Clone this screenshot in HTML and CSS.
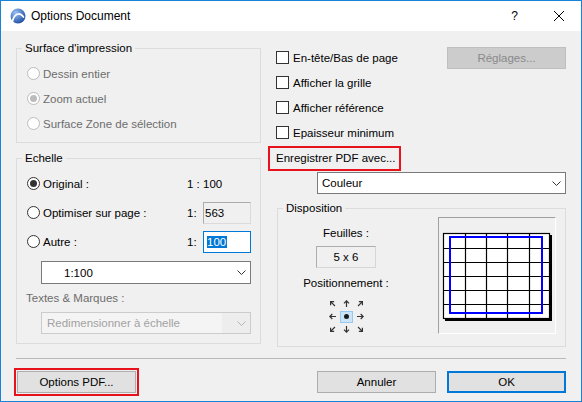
FILE: index.html
```html
<!DOCTYPE html>
<html lang="fr">
<head>
<meta charset="utf-8">
<title>Options Document</title>
<link rel="stylesheet" href="styles.css">
</head>
<body>
<div class="window">
  <div class="titlebar">
    <svg class="app-icon" viewBox="0 0 16 16" width="16" height="16">
      <defs>
        <radialGradient id="ball" cx="35%" cy="30%" r="75%">
          <stop offset="0" stop-color="#9cc2f2"/>
          <stop offset="1" stop-color="#1d4ea6"/>
        </radialGradient>
      </defs>
      <circle cx="8" cy="8" r="7.5" fill="url(#ball)"/>
      <path d="M2.5 13.5 C4 6 9.5 3 13.5 9" fill="none" stroke="#ffffff" stroke-width="1.7" stroke-linecap="round"/>
    </svg>
    <span class="title">Options Document</span>
    <span class="help">?</span>
    <svg class="close" viewBox="0 0 10 10" width="10" height="10">
      <path d="M0 0L10 10M10 0L0 10" stroke="#000" stroke-width="1"/>
    </svg>
  </div>

  <div class="body">
    <div class="main">
      <div class="left">
        <div class="group">
          <div class="group-title">Surface d'impression</div>
          <div class="radio-list">
            <div class="radio-row disabled"><span class="radio"></span><span>Dessin entier</span></div>
            <div class="radio-row disabled"><span class="radio checked"></span><span>Zoom actuel</span></div>
            <div class="radio-row disabled"><span class="radio"></span><span>Surface Zone de sélection</span></div>
          </div>
        </div>

        <div class="group echelle">
          <div class="group-title">Echelle</div>
          <div class="scale-rows">
            <div class="scale-row">
              <div class="radio-row"><span class="radio checked"></span><span>Original :</span></div>
              <div class="ratio"><span>1 : 100</span></div>
            </div>
            <div class="scale-row">
              <div class="radio-row"><span class="radio"></span><span>Optimiser sur page :</span></div>
              <div class="ratio"><span>1:</span><span class="field readonly">563</span></div>
            </div>
            <div class="scale-row">
              <div class="radio-row"><span class="radio"></span><span>Autre :</span></div>
              <div class="ratio"><span>1:</span><span class="field focused"><span class="selected">100</span></span></div>
            </div>
          </div>
          <div class="dropdown scale-dd">
            <span class="dd-text">1:100</span>
            <svg class="chev" viewBox="0 0 9 5" width="9" height="5"><polyline points="0.5,0.5 4.5,4.5 8.5,0.5" fill="none" stroke="#333"/></svg>
          </div>
          <div class="muted-label">Textes &amp; Marques :</div>
          <div class="dropdown disabled-dd">
            <span class="dd-text">Redimensionner à échelle</span>
            <svg class="chev" viewBox="0 0 9 5" width="9" height="5"><polyline points="0.5,0.5 4.5,4.5 8.5,0.5" fill="none" stroke="#b5b5b5"/></svg>
          </div>
        </div>
      </div>

      <div class="right">
        <div class="check-row">
          <span class="checkbox"></span><span>En-tête/Bas de page</span>
          <span class="button disabled-btn">Réglages...</span>
        </div>
        <div class="check-row"><span class="checkbox"></span><span>Afficher la grille</span></div>
        <div class="check-row"><span class="checkbox"></span><span>Afficher référence</span></div>
        <div class="check-row"><span class="checkbox"></span><span>Epaisseur minimum</span></div>

        <div class="pdf-label">Enregistrer PDF avec...</div>
        <div class="dropdown color-dd">
          <span class="dd-text">Couleur</span>
          <svg class="chev" viewBox="0 0 9 5" width="9" height="5"><polyline points="0.5,0.5 4.5,4.5 8.5,0.5" fill="none" stroke="#333"/></svg>
        </div>

        <div class="group dispo">
          <div class="group-title">Disposition</div>
          <div class="dispo-body">
            <div class="dispo-left">
              <div class="feuilles-label">Feuilles :</div>
              <div class="sheets-box">5 x 6</div>
              <div class="pos-label">Positionnement :</div>
              <div class="arrows">
                <span class="arrow"><svg viewBox="0 0 7 7" width="7" height="7"><g transform="rotate(-45 3.5 3.5)"><path d="M3.5 7V0.8M1 3.3L3.5 0.8L6 3.3"/></g></svg></span>
                <span class="arrow"><svg viewBox="0 0 7 7" width="7" height="7"><g><path d="M3.5 7V0.8M1 3.3L3.5 0.8L6 3.3"/></g></svg></span>
                <span class="arrow"><svg viewBox="0 0 7 7" width="7" height="7"><g transform="rotate(45 3.5 3.5)"><path d="M3.5 7V0.8M1 3.3L3.5 0.8L6 3.3"/></g></svg></span>
                <span class="arrow"><svg viewBox="0 0 7 7" width="7" height="7"><g transform="rotate(-90 3.5 3.5)"><path d="M3.5 7V0.8M1 3.3L3.5 0.8L6 3.3"/></g></svg></span>
                <span class="arrow"><span class="center-tile"><span class="dot"></span></span></span>
                <span class="arrow"><svg viewBox="0 0 7 7" width="7" height="7"><g transform="rotate(90 3.5 3.5)"><path d="M3.5 7V0.8M1 3.3L3.5 0.8L6 3.3"/></g></svg></span>
                <span class="arrow"><svg viewBox="0 0 7 7" width="7" height="7"><g transform="rotate(-135 3.5 3.5)"><path d="M3.5 7V0.8M1 3.3L3.5 0.8L6 3.3"/></g></svg></span>
                <span class="arrow"><svg viewBox="0 0 7 7" width="7" height="7"><g transform="rotate(180 3.5 3.5)"><path d="M3.5 7V0.8M1 3.3L3.5 0.8L6 3.3"/></g></svg></span>
                <span class="arrow"><svg viewBox="0 0 7 7" width="7" height="7"><g transform="rotate(135 3.5 3.5)"><path d="M3.5 7V0.8M1 3.3L3.5 0.8L6 3.3"/></g></svg></span>
              </div>
            </div>
            <div class="preview">
              <svg viewBox="0 0 116 115" width="116" height="115">
                <rect x="6" y="17" width="107" height="86" fill="#000"/>
                <rect x="4.5" y="15.5" width="106" height="85" fill="#fff" stroke="#000" stroke-width="1.2"/>
                <g stroke="#000" stroke-width="1.2">
                  <line x1="26.5" y1="15.5" x2="26.5" y2="100.5"/>
                  <line x1="47.5" y1="15.5" x2="47.5" y2="100.5"/>
                  <line x1="68.5" y1="15.5" x2="68.5" y2="100.5"/>
                  <line x1="90.5" y1="15.5" x2="90.5" y2="100.5"/>
                  <line x1="4.5" y1="30.5" x2="110.5" y2="30.5"/>
                  <line x1="4.5" y1="44.5" x2="110.5" y2="44.5"/>
                  <line x1="4.5" y1="58.5" x2="110.5" y2="58.5"/>
                  <line x1="4.5" y1="72.5" x2="110.5" y2="72.5"/>
                  <line x1="4.5" y1="86.5" x2="110.5" y2="86.5"/>
                </g>
                <rect x="11" y="19" width="92" height="76" fill="none" stroke="#0000ff" stroke-width="2"/>
              </svg>
            </div>
          </div>
        </div>
      </div>
    </div>

    <div class="separator"></div>

    <div class="footer">
      <span class="button pdf-btn">Options PDF...</span>
      <span class="button cancel-btn">Annuler</span>
      <span class="button ok-btn">OK</span>
    </div>
  </div>
</div>
</body>
</html>
```

FILE: styles.css
```css
html, body {
  margin: 0;
  padding: 0;
  background: #f0f0f0;
}

.window {
  width: 582px;
  height: 402px;
  box-sizing: border-box;
  border: 1px solid #1883d7;
  background: #f0f0f0;
  font-family: "Liberation Sans", Arial, sans-serif;
  font-size: 12px;
  color: #000;
  display: flex;
  flex-direction: column;
}

/* Title bar */
.titlebar {
  height: 30px;
  flex: none;
  background: #fff;
  display: flex;
  align-items: center;
  padding: 0 17px 0 9px;
}
.app-icon { margin-right: 5px; flex: none; }
.title { flex: 1; }
.help { margin-right: 36px; font-size: 12px; }
.close { flex: none; }

/* Body */
.body {
  flex: 1;
  padding: 0 15px;
  font-size: 11.5px;
}
.main {
  display: grid;
  grid-template-columns: 245px 298px;
  column-gap: 7px;
}
.left { padding-top: 17px; }

.group {
  border: 1px solid #dcdcdc;
}
.group-title {
  width: fit-content;
  height: 15px;
  line-height: 15px;
  margin: -8px 0 0 5px;
  padding: 0 3px;
  background: #f0f0f0;
}

/* Radios */
.radio-list { padding: 5px 0 6px 10px; }
.radio-row {
  height: 25px;
  display: flex;
  align-items: center;
  gap: 3px;
}
.radio {
  width: 13px;
  height: 13px;
  box-sizing: border-box;
  border: 1px solid #333;
  border-radius: 50%;
  background: #fff;
  display: flex;
  align-items: center;
  justify-content: center;
  flex: none;
}
.radio.checked::after {
  content: "";
  width: 7px;
  height: 7px;
  border-radius: 50%;
  background: #333;
}
.radio-row.disabled { color: #6d6d6d; }
.radio-row.disabled .radio { border-color: #bcbcbc; background: #fff; }
.radio-row.disabled .radio.checked::after { background: #bcbcbc; }

.echelle { margin-top: 15px; }
.scale-rows { margin-top: 3px; }
.scale-row {
  height: 29px;
  display: grid;
  grid-template-columns: 1fr 64px;
  align-items: center;
  padding: 0 9px 0 10px;
}
.scale-row .radio-row { height: 29px; }
.ratio {
  display: flex;
  align-items: center;
  justify-content: space-between;
}
.field {
  width: 48px;
  height: 22px;
  box-sizing: border-box;
  line-height: 20px;
  display: block;
}
.field.readonly {
  background: #f0f0f0;
  border: 1px solid #acacac;
  border-right-color: #dadada;
  border-bottom-color: #dadada;
  padding-left: 1px;
}
.field.focused {
  background: #fff;
  border: 1px solid #0078d7;
  padding-left: 3px;
}
.selected {
  background: #0078d7;
  color: #fff;
  display: inline-block;
  line-height: 12px;
  padding: 0 1px 0 0;
}

/* Dropdowns */
.dropdown {
  box-sizing: border-box;
  display: flex;
  align-items: center;
  background: #fff;
  border: 1px solid #7a7a7a;
}
.dd-text { flex: 1; }
.scale-dd {
  margin: 5px 0 0 24px;
  width: 210px;
  height: 23px;
  padding: 0 4px 0 22px;
}
.muted-label {
  margin-top: 7px;
  padding-left: 9px;
  height: 15px;
  line-height: 15px;
  color: #6d6d6d;
}
.disabled-dd {
  margin: 6px 0 9px 24px;
  width: 210px;
  height: 22px;
  padding: 0 4px 0 0;
  border-color: #cccccc;
  background: #ededed;
  color: #a2a2a2;
}
.disabled-dd .dd-text {
  align-self: stretch;
  line-height: 20px;
  padding-left: 5px;
  background: #f4f4f4;
  margin-right: 15px;
}

/* Right column */
.right { padding-top: 14px; }
.check-row {
  height: 25px;
  display: flex;
  align-items: center;
  padding-left: 8px;
}
.checkbox {
  width: 13px;
  height: 13px;
  box-sizing: border-box;
  border: 1px solid #333;
  background: #fff;
  margin-right: 4px;
  flex: none;
}

.button {
  box-sizing: border-box;
  width: 119px;
  height: 22px;
  display: flex;
  align-items: center;
  justify-content: center;
  background: #e1e1e1;
  border: 1px solid #adadad;
}
.disabled-btn {
  margin-left: auto;
  background: #cccccc;
  border-color: #bfbfbf;
  color: #8a8a8a;
}

.pdf-label {
  width: fit-content;
  margin-top: 1px;
  border: 2px solid #e8121c;
  padding: 3px 3px 3px 6px;
  line-height: 15px;
}
.color-dd {
  margin: 1px 0 0 49px;
  height: 22px;
  padding: 0 4px 0 4px;
}

.dispo { margin: 14px 0 0 9px; }
.dispo-body {
  display: flex;
  margin-top: 1px;
  padding: 0 9px 10px 0;
}
.dispo-left {
  width: 136px;
  display: flex;
  flex-direction: column;
  align-items: center;
}
.feuilles-label {
  margin-top: 9px;
  line-height: 15px;
}
.sheets-box {
  margin-top: 5px;
  width: 60px;
  height: 22px;
  box-sizing: border-box;
  border: 1px solid #adadad;
  border-right-color: #d6d6d6;
  border-bottom-color: #d6d6d6;
  display: flex;
  align-items: center;
  justify-content: center;
}
.pos-label {
  margin-top: 8px;
  line-height: 15px;
}
.arrows {
  margin-top: 6px;
  display: grid;
  grid-template-columns: repeat(3, 14px);
  grid-template-rows: repeat(3, 13px);
}
.arrow {
  display: flex;
  align-items: center;
  justify-content: center;
}
.arrow svg path {
  fill: none;
  stroke: #333;
  stroke-width: 1.2;
}
.center-tile {
  width: 13px;
  height: 12px;
  box-sizing: border-box;
  background: #cce4f7;
  border: 1px solid #99c9ef;
  display: flex;
  align-items: center;
  justify-content: center;
}
.dot {
  width: 5px;
  height: 5px;
  border-radius: 50%;
  background: #1a1a1a;
}
.preview {
  margin-left: auto;
  width: 118px;
  height: 117px;
  box-sizing: border-box;
  border-top: 1px solid #a0a0a0;
  border-left: 1px solid #a0a0a0;
  border-right: 1px solid #ffffff;
  border-bottom: 1px solid #ffffff;
}
.preview svg { display: block; }

/* Footer */
.separator {
  margin-top: 11px;
  height: 1px;
  background: #b9b9b9;
}
.footer {
  margin-top: 12px;
  display: flex;
}
.pdf-btn {
  margin-left: 1px;
  outline: 2px solid #e8121c;
  outline-offset: 1px;
}
.cancel-btn { margin-left: auto; }
.ok-btn {
  margin-left: 11px;
  border: 2px solid #0078d7;
}
```
